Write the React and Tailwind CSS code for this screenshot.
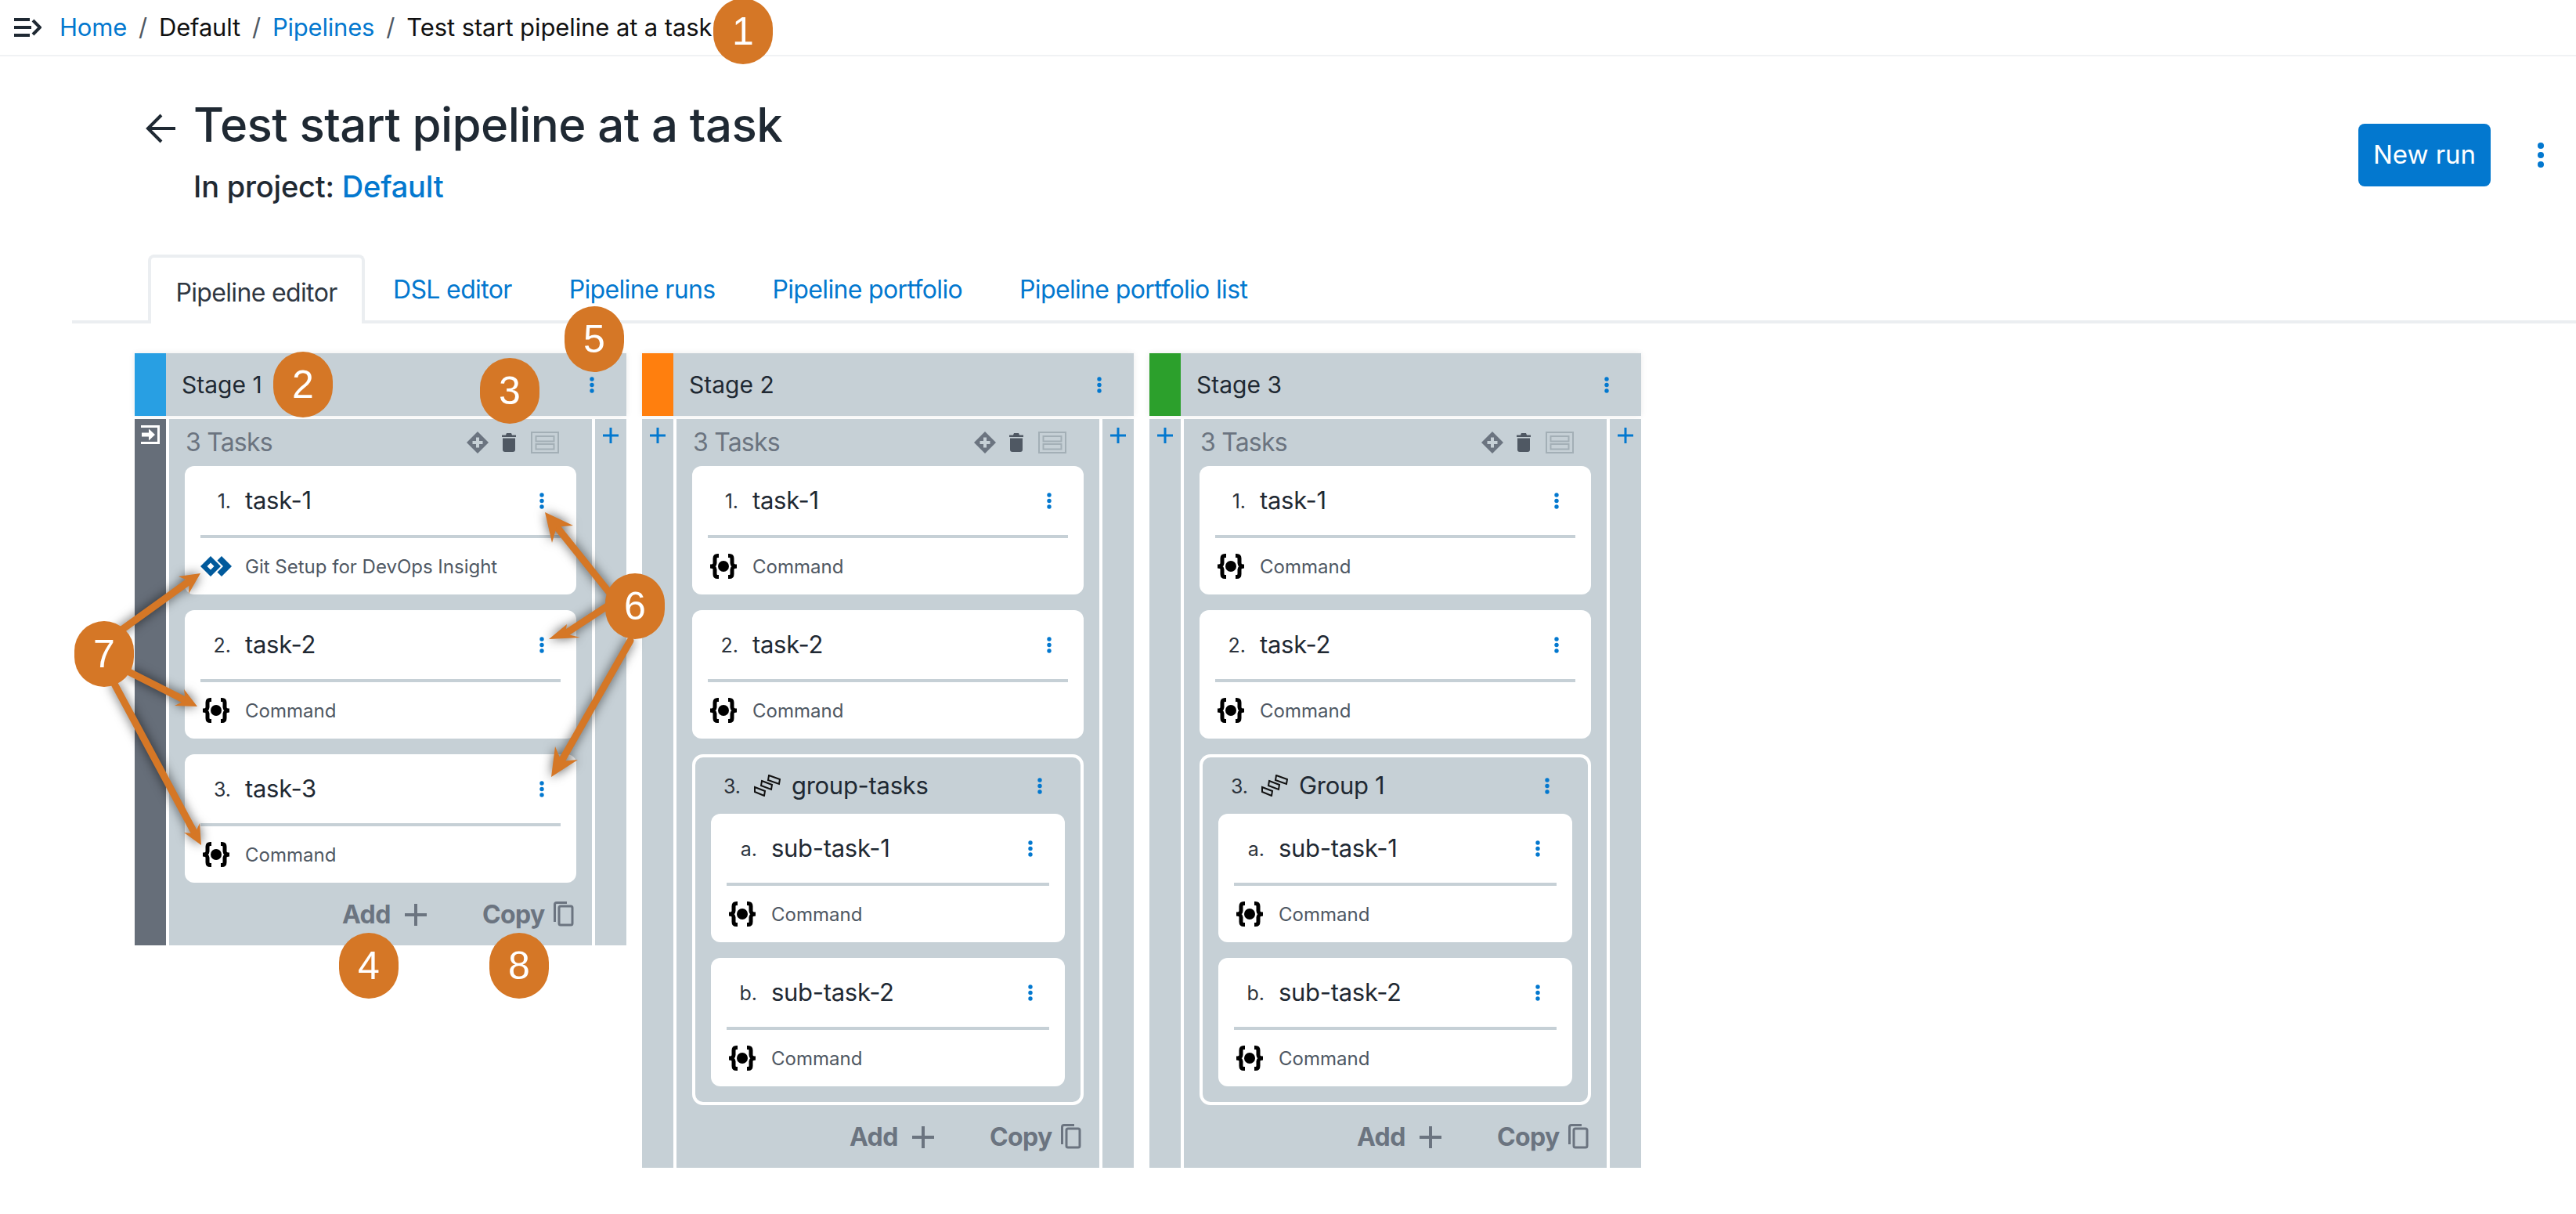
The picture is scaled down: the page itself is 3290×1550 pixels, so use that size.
import React from "react";

const Dots = ({ className = "" }) => (
  <svg width="6" height="21" viewBox="0 0 6 21" className={"fill-[#0378cf] " + className}>
    <circle cx="3" cy="3" r="2.700" />
    <circle cx="3" cy="10.500" r="2.700" />
    <circle cx="3" cy="18" r="2.700" />
  </svg>
);

const Plus = ({ size = 20, stroke = 3, className = "stroke-[#0378cf]" }) => (
  <svg width={size} height={size} viewBox={`0 0 ${size} ${size}`} strokeWidth={stroke} className={className}>
    <path d={`M${size / 2} 0V${size}M0 ${size / 2}H${size}`} fill="none" />
  </svg>
);

const CommandIcon = () => (
  <svg width="40" height="32" viewBox="0 0 40 32" className="shrink-0">
    <path d="M14 2.500H12.500C10 2.500 9 3.500 9 6v6c0 2-2 4-6 4 4 0 6 2 6 4v6c0 2.500 1 3.500 3.500 3.500H14" fill="none" stroke="#000" strokeWidth="5" />
    <path d="M26 2.500h1.500C30 2.500 31 3.500 31 6v6c0 2 2 4 6 4-4 0-6 2-6 4v6c0 2.500-1 3.500-3.500 3.500H26" fill="none" stroke="#000" strokeWidth="5" />
    <circle cx="20" cy="16" r="7" fill="#000" />
  </svg>
);

const GitIcon = () => (
  <svg width="40" height="26" viewBox="0 0 40 26" className="shrink-0">
    <path fillRule="evenodd" d="M13 0L26 13 13 26 0 13ZM13 8.500L8.500 13 13 17.500 17.500 13Z" fill="#015a9c" />
    <path d="M27 0L40 13 27 26 21.500 20.500 29 13 21.500 5.500Z" fill="#015a9c" />
  </svg>
);

const GroupIcon = () => (
  <svg width="34" height="28" viewBox="0 0 34 28" className="shrink-0" fill="none" stroke="#111" strokeWidth="2" strokeLinejoin="miter">
    <path d="M1 16l13 5-1 6L1 22Z" />
    <path d="M10 8l13 5-1 6-13-5Z" />
    <path d="M19 1l14 5-1 6-14-5Z" />
  </svg>
);

const Card = ({ idx, name, type = "Command" }) => (
  <div className="h-[164px] bg-white rounded-[12px] flex flex-col">
    <div className="h-[88px] flex items-center shrink-0">
      <span className="w-[59px] mt-[4px] text-right text-[25px] text-[#2c333c] shrink-0">{idx}</span>
      <span className="ml-[18px] text-[31px] tracking-[-0.3px] text-[#1f2933] flex-1">{name}</span>
      <Dots className="mr-[41px]" />
    </div>
    <div className="h-[4px] mx-[20px] bg-[#c6d0d6] shrink-0" />
    <div className="flex-1 flex items-center pl-[20px]">
      {type === "Command" ? <CommandIcon /> : <GitIcon />}
      <span className="ml-[17px] mt-[2px] text-[24px] text-[#4f5863]">{type}</span>
    </div>
  </div>
);

const Group = ({ name }) => (
  <div className="border-[4px] border-white rounded-[14px] px-[20px] pb-[20px]">
    <div className="h-[72px] flex items-center">
      <span className="w-[38px] mt-[4px] text-right text-[25px] text-[#2c333c] shrink-0">3.</span>
      <span className="ml-[17px]"><GroupIcon /></span>
      <span className="ml-[14px] flex-1 text-[31px] tracking-[-0.3px] text-[#1f2933]">{name}</span>
      <Dots className="mr-[29px]" />
    </div>
    <div className="flex flex-col gap-[20px]">
      <Card idx="a." name="sub-task-1" />
      <Card idx="b." name="sub-task-2" />
    </div>
  </div>
);

const Stage = ({ name, colorClass, first, children }) => (
  <div className="w-[628px] flex flex-col">
    <div className="h-[80px] bg-[#c6d0d6] flex items-center shadow-[0_0_8px_rgba(0,0,0,0.08)]">
      <div className={"w-[40px] h-full " + colorClass} />
      <span className="ml-[20px] flex-1 text-[30px] text-[#1f2933]">{name}</span>
      <Dots className="mr-[41px]" />
    </div>
    <div className="mt-[4px] flex gap-[4px]">
      {first ? (
        <div className="w-[40px] bg-[#666e79] flex justify-center pt-[8px]">
          <svg width="24" height="24" viewBox="0 0 24 24" fill="none">
            <path d="M0 1.500H22.500V22.500H0" stroke="#fff" strokeWidth="3" />
            <path d="M1 9.500H10V4.500L18 12 10 19.500V14.500H1Z" fill="#fff" />
          </svg>
        </div>
      ) : (
        <div className="w-[40px] bg-[#c6d0d6] flex justify-center pt-[11px]">
          <Plus />
        </div>
      )}
      <div className="w-[540px] bg-[#c6d0d6] px-[20px]">
        <div className="h-[60px] flex items-center">
          <span className="ml-[1px] flex-1 text-[32px] tracking-[-0.8px] text-[#6b7480]">3 Tasks</span>
          <svg width="28" height="28" viewBox="0 0 28 28">
            <path d="M14 0L28 14 14 28 0 14Z" fill="#6b7480" />
            <path d="M12 7.500h4V12h4.500v4H16v4.500h-4V16H7.500v-4H12Z" fill="#c6d0d6" />
          </svg>
          <svg width="18" height="24" viewBox="0 0 18 24" className="ml-[17px]">
            <path d="M0 2.500h5L6 0h6l1 2.500h5V5H0Z" fill="#4f5863" />
            <path d="M1 6.500h16V21c0 2-1 3-3 3H4c-2 0-3-1-3-3Z" fill="#4f5863" />
          </svg>
          <svg width="36" height="28" viewBox="0 0 36 28" fill="none" stroke="#a3afb6" strokeWidth="2" className="ml-[19px] mr-[22px]">
            <rect x="1" y="1" width="34" height="26" />
            <rect x="6.500" y="6" width="23" height="6.500" />
            <rect x="6.500" y="16" width="23" height="6.500" />
          </svg>
        </div>
        <div className="flex flex-col gap-[20px]">{children}</div>
        <div className="h-[80px] pt-[2px] flex items-center text-[32px] font-bold tracking-[-0.6px] text-[#6b7480]">
          <span className="ml-[201px] w-[80px]">Add</span>
          <Plus size={28} stroke={4} className="stroke-[#6b7480]" />
          <span className="ml-[71px] w-[91px]">Copy</span>
          <svg width="26" height="32" viewBox="0 0 26 32" fill="none" stroke="#6b7480" strokeWidth="3" className="-mt-[2px]">
            <rect x="7" y="6" width="17" height="24" rx="2" />
            <path d="M1.500 26V4c0-1.500 1-2.500 2.500-2.500H17" />
          </svg>
        </div>
      </div>
      <div className="w-[40px] bg-[#c6d0d6] flex justify-center pt-[11px]">
        <Plus />
      </div>
    </div>
  </div>
);

const arrows = [
  { s: [785, 765], t: [696, 654], a: [732, 671], b: [705, 693] },
  { s: [780, 771], t: [701, 816], a: [741, 814], b: [724, 797] },
  { s: [805, 818], t: [704, 992], a: [738, 970], b: [709, 953] },
  { s: [150, 808], t: [256, 732], a: [228, 736], b: [241, 758] },
  { s: [165, 858], t: [252, 902], a: [223, 901], b: [235, 880] },
  { s: [146, 873], t: [257, 1079], a: [235, 1063], b: [255, 1051] },
];

const marks = [
  { n: "1", c: "left-[911px] -top-[2px]" },
  { n: "2", c: "left-[349px] top-[449px]" },
  { n: "3", c: "left-[613px] top-[457px]" },
  { n: "5", c: "left-[721px] top-[391px]" },
  { n: "6", c: "left-[773px] top-[732px]" },
  { n: "7", c: "left-[95px] top-[793px]" },
  { n: "4", c: "left-[433px] top-[1191px]" },
  { n: "8", c: "left-[625px] top-[1191px]" },
];

const Annotations = () => (
  <>
    <svg width="3290" height="1550" className="absolute left-0 top-0 pointer-events-none [filter:drop-shadow(0_0_7px_rgba(0,0,0,0.65))]">
      {arrows.map((r, i) => {
        const nx = (r.a[0] + r.b[0]) / 2;
        const ny = (r.a[1] + r.b[1]) / 2;
        const mx = (nx * 2 + r.t[0]) / 3;
        const my = (ny * 2 + r.t[1]) / 3;
        return (
          <g key={i}>
            <line x1={r.s[0]} y1={r.s[1]} x2={mx} y2={my} stroke="#d57726" strokeWidth="9" strokeLinecap="round" />
            <path d={`M${r.t[0]} ${r.t[1]}L${r.a[0]} ${r.a[1]}L${mx} ${my}L${r.b[0]} ${r.b[1]}Z`} fill="#d57726" />
          </g>
        );
      })}
    </svg>
    {marks.map((m) => (
      <div key={m.n} className={"absolute w-[76px] h-[84px] rounded-full bg-[#d57726] text-white text-[50px] [font-family:'Liberation_Sans',sans-serif] flex items-center justify-center " + m.c}>
        {m.n}
      </div>
    ))}
  </>
);

const tabs = ["DSL editor", "Pipeline runs", "Pipeline portfolio", "Pipeline portfolio list"];

export default function App() {
  return (
    <div className="relative w-[3290px] h-[1550px] bg-white overflow-hidden [font-family:Inter,'Liberation_Sans',sans-serif]">
      <nav className="h-[72px] border-b-[2px] border-[#f0f2f4] flex items-center pl-[18px] text-[31px] tracking-[-0.2px]">
        <svg width="35" height="24" viewBox="0 0 35 24" fill="none" stroke="#1f2933" strokeWidth="4">
          <path d="M0 2H20M0 12H22M0 22H20" />
          <path d="M24 3l9 9-9 9" />
        </svg>
        <a className="ml-[23px] text-[#0378cf]">Home</a>
        <span className="ml-[15px] text-[#4f5863]">/</span>
        <span className="ml-[15px] text-[#111]">Default</span>
        <span className="ml-[15px] text-[#4f5863]">/</span>
        <a className="ml-[15px] text-[#0378cf]">Pipelines</a>
        <span className="ml-[15px] text-[#4f5863]">/</span>
        <span className="ml-[15px] tracking-[-0.1px] text-[#111]">Test start pipeline at a task</span>
      </nav>

      <header className="h-[253px] flex justify-between">
        <div className="flex pl-[186px] pt-[50px]">
          <svg width="38" height="38" viewBox="0 0 38 38" fill="none" stroke="#1f2933" strokeWidth="4" className="mt-[23px]">
            <path d="M38 19H3M20 2L3 19l17 17" />
          </svg>
          <div className="ml-[23px]">
            <h1 className="text-[60px] leading-[74px] font-medium text-[#1f2933] tracking-[-0.6px]">Test start pipeline at a task</h1>
            <p className="mt-[19px] text-[38px] leading-[46px] font-medium tracking-[-0.2px] text-[#1f2933]">
              In project: <a className="text-[#0378cf]">Default</a>
            </p>
          </div>
        </div>
        <div className="flex pt-[86px] pr-[40px]">
          <button className="w-[169px] h-[80px] rounded-[8px] bg-[#0378cf] text-white text-[33px]">New run</button>
          <svg width="10" height="34" viewBox="0 0 10 34" className="ml-[59px] mt-[23px] fill-[#0378cf]">
            <circle cx="5" cy="5" r="4" />
            <circle cx="5" cy="17" r="4" />
            <circle cx="5" cy="29" r="4" />
          </svg>
        </div>
      </header>

      <div className="ml-[92px] h-[88px] border-b-[4px] border-[#ebeef1] flex items-stretch text-[32px] tracking-[-0.65px]">
        <div className="ml-[97px] w-[277px] h-[88px] pt-[6px] shrink-0 border-[4px] border-b-0 border-[#ebeef1] rounded-t-[8px] bg-white flex items-center justify-center text-[#2f3742]">
          Pipeline editor
        </div>
        <div className="flex items-center gap-[73px] pt-[6px] ml-[36px] text-[#0378cf]">
          {tabs.map((t) => (
            <a key={t}>{t}</a>
          ))}
        </div>
      </div>

      <main className="pt-[38px] pl-[172px] flex gap-[20px] items-start">
        <Stage name="Stage 1" colorClass="bg-[#289fe3]" first>
          <Card idx="1." name="task-1" type="Git Setup for DevOps Insight" />
          <Card idx="2." name="task-2" />
          <Card idx="3." name="task-3" />
        </Stage>
        <Stage name="Stage 2" colorClass="bg-[#ff7f0e]">
          <Card idx="1." name="task-1" />
          <Card idx="2." name="task-2" />
          <Group name="group-tasks" />
        </Stage>
        <Stage name="Stage 3" colorClass="bg-[#2ca02c]">
          <Card idx="1." name="task-1" />
          <Card idx="2." name="task-2" />
          <Group name="Group 1" />
        </Stage>
      </main>

      <Annotations />
    </div>
  );
}
